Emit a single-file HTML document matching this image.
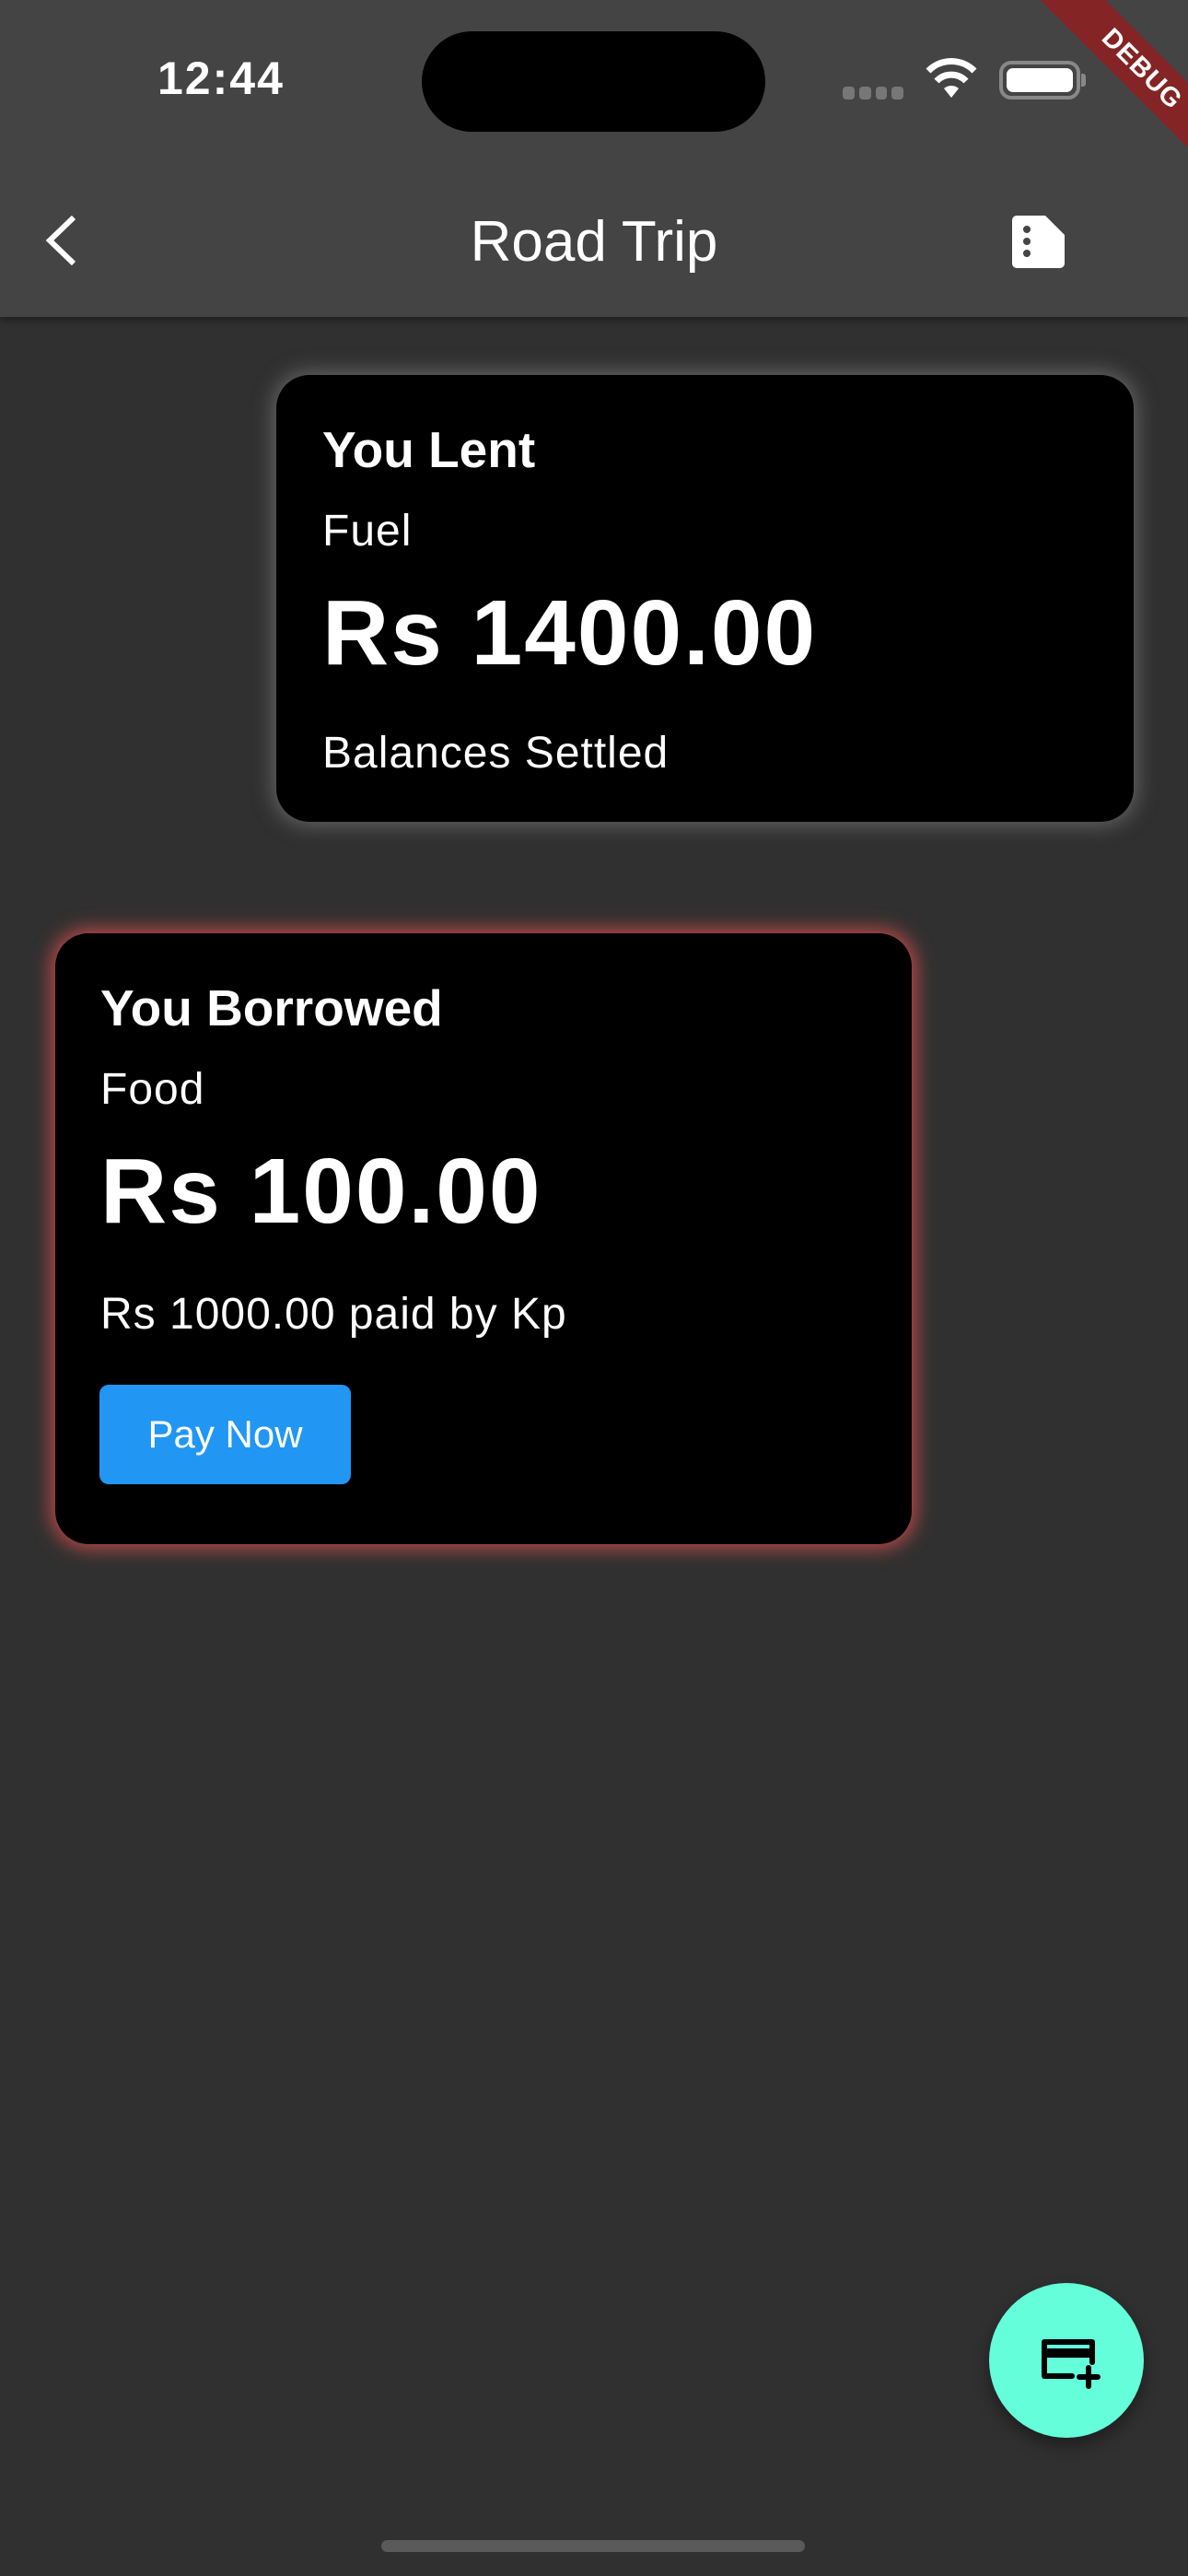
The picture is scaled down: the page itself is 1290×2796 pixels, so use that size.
<!DOCTYPE html>
<html><head><meta charset="utf-8"><style>
*{margin:0;padding:0;box-sizing:border-box}
body{width:1290px;height:2796px;background:#303030;position:relative;overflow:hidden;font-family:"Liberation Sans",sans-serif;color:#fff}
.abs{position:absolute}
.bar{left:0;top:0;width:1290px;height:344px;background:#444;box-shadow:0 4px 8px rgba(0,0,0,.35)}
.card{position:absolute;background:#000;border-radius:36px}
.t{position:absolute;white-space:nowrap;line-height:1}
.title{font-size:55px;font-weight:bold}
.sub{font-size:48px;letter-spacing:1px}
.amt{font-size:100px;font-weight:bold;letter-spacing:2px}
</style></head><body>
<div class="abs bar"></div>
<div class="t" style="left:171px;top:60px;font-size:50px;font-weight:bold;letter-spacing:2px">12:44</div>
<div class="abs" style="left:458px;top:34px;width:373px;height:109px;background:#000;border-radius:55px"></div>
<div class="abs" style="left:915px;top:94px;width:66px;height:14px;display:flex;gap:5px">
<div style="flex:1;background:#777;border-radius:4px"></div><div style="flex:1;background:#777;border-radius:4px"></div><div style="flex:1;background:#777;border-radius:4px"></div><div style="flex:1;background:#777;border-radius:4px"></div></div>
<svg class="abs" style="left:1003px;top:62px" width="60" height="46" viewBox="0 0 60 46"><path d="M30 44 L22 34 A12 12 0 0 1 38 34 Z" fill="#fff"/><path d="M14 26 A22 22 0 0 1 46 26" stroke="#fff" stroke-width="7" fill="none"/><path d="M5 15 A35 35 0 0 1 55 15" stroke="#fff" stroke-width="7" fill="none"/></svg>
<div class="abs" style="left:1085px;top:66px;width:88px;height:42px;border:4px solid #888;border-radius:13px;padding:4px"><div style="width:100%;height:100%;background:#fff;border-radius:7px"></div></div>
<div class="abs" style="left:1174px;top:80px;width:5px;height:14px;background:#888;border-radius:0 3px 3px 0"></div>
<div class="abs" style="left:1080px;top:50px;width:320px;height:50px;background:#842424;transform:rotate(45deg);color:#fff;font-weight:bold;font-size:29px;text-align:center;line-height:50px;letter-spacing:1px">DEBUG</div>
<svg class="abs" style="left:44px;top:232px" width="44" height="58" viewBox="0 0 44 58"><path d="M36 4 L10 29 L36 54" stroke="#fff" stroke-width="6" fill="none" stroke-linejoin="miter"/></svg>
<div class="t" style="left:0;width:1290px;text-align:center;top:232px;font-size:62px">Road Trip</div>
<svg class="abs" style="left:1099px;top:234px" width="57" height="57" viewBox="0 0 57 57"><path d="M5 0 H36 L57 21 V52 A5 5 0 0 1 52 57 H5 A5 5 0 0 1 0 52 V5 A5 5 0 0 1 5 0Z" fill="#fff"/><circle cx="16" cy="15" r="4" fill="#444"/><circle cx="16" cy="28" r="4" fill="#444"/><circle cx="16" cy="41" r="4" fill="#444"/></svg>

<div class="card" style="left:300px;top:407px;width:931px;height:485px;box-shadow:0 0 22px 4px rgba(150,150,150,.5)">
<div class="t title" style="left:50px;top:54px">You Lent</div>
<div class="t sub" style="left:50px;top:146px">Fuel</div>
<div class="t amt" style="left:50px;top:230px">Rs 1400.00</div>
<div class="t sub" style="left:50px;top:387px">Balances Settled</div>
</div>

<div class="card" style="left:60px;top:1013px;width:930px;height:663px;box-shadow:0 0 20px 5px rgba(230,80,80,.75)">
<div class="t title" style="left:49px;top:54px">You Borrowed</div>
<div class="t sub" style="left:49px;top:146px">Food</div>
<div class="t amt" style="left:49px;top:230px">Rs 100.00</div>
<div class="t sub" style="left:49px;top:390px">Rs 1000.00 paid by Kp</div>
<div class="abs" style="left:48px;top:490px;width:273px;height:108px;background:#2196F3;border-radius:10px;font-size:42px;line-height:108px;text-align:center">Pay Now</div>
</div>

<div class="abs" style="left:1074px;top:2478px;width:168px;height:168px;border-radius:50%;background:#64FFDA;box-shadow:0 8px 18px rgba(0,0,0,.4)"></div>
<svg class="abs" style="left:1128px;top:2536px" width="68" height="58" viewBox="0 0 68 58"><path d="M36 43 H6 V6 H58 V28" stroke="#000" stroke-width="6" fill="none" stroke-linecap="round" stroke-linejoin="round"/><rect x="4" y="13" width="56" height="10" fill="#000"/><path d="M54 34 V54 M44 44 H64" stroke="#000" stroke-width="6" stroke-linecap="round"/></svg>

<div class="abs" style="left:414px;top:2757px;width:460px;height:13px;background:#5a5a5a;border-radius:7px"></div>
</body></html>
